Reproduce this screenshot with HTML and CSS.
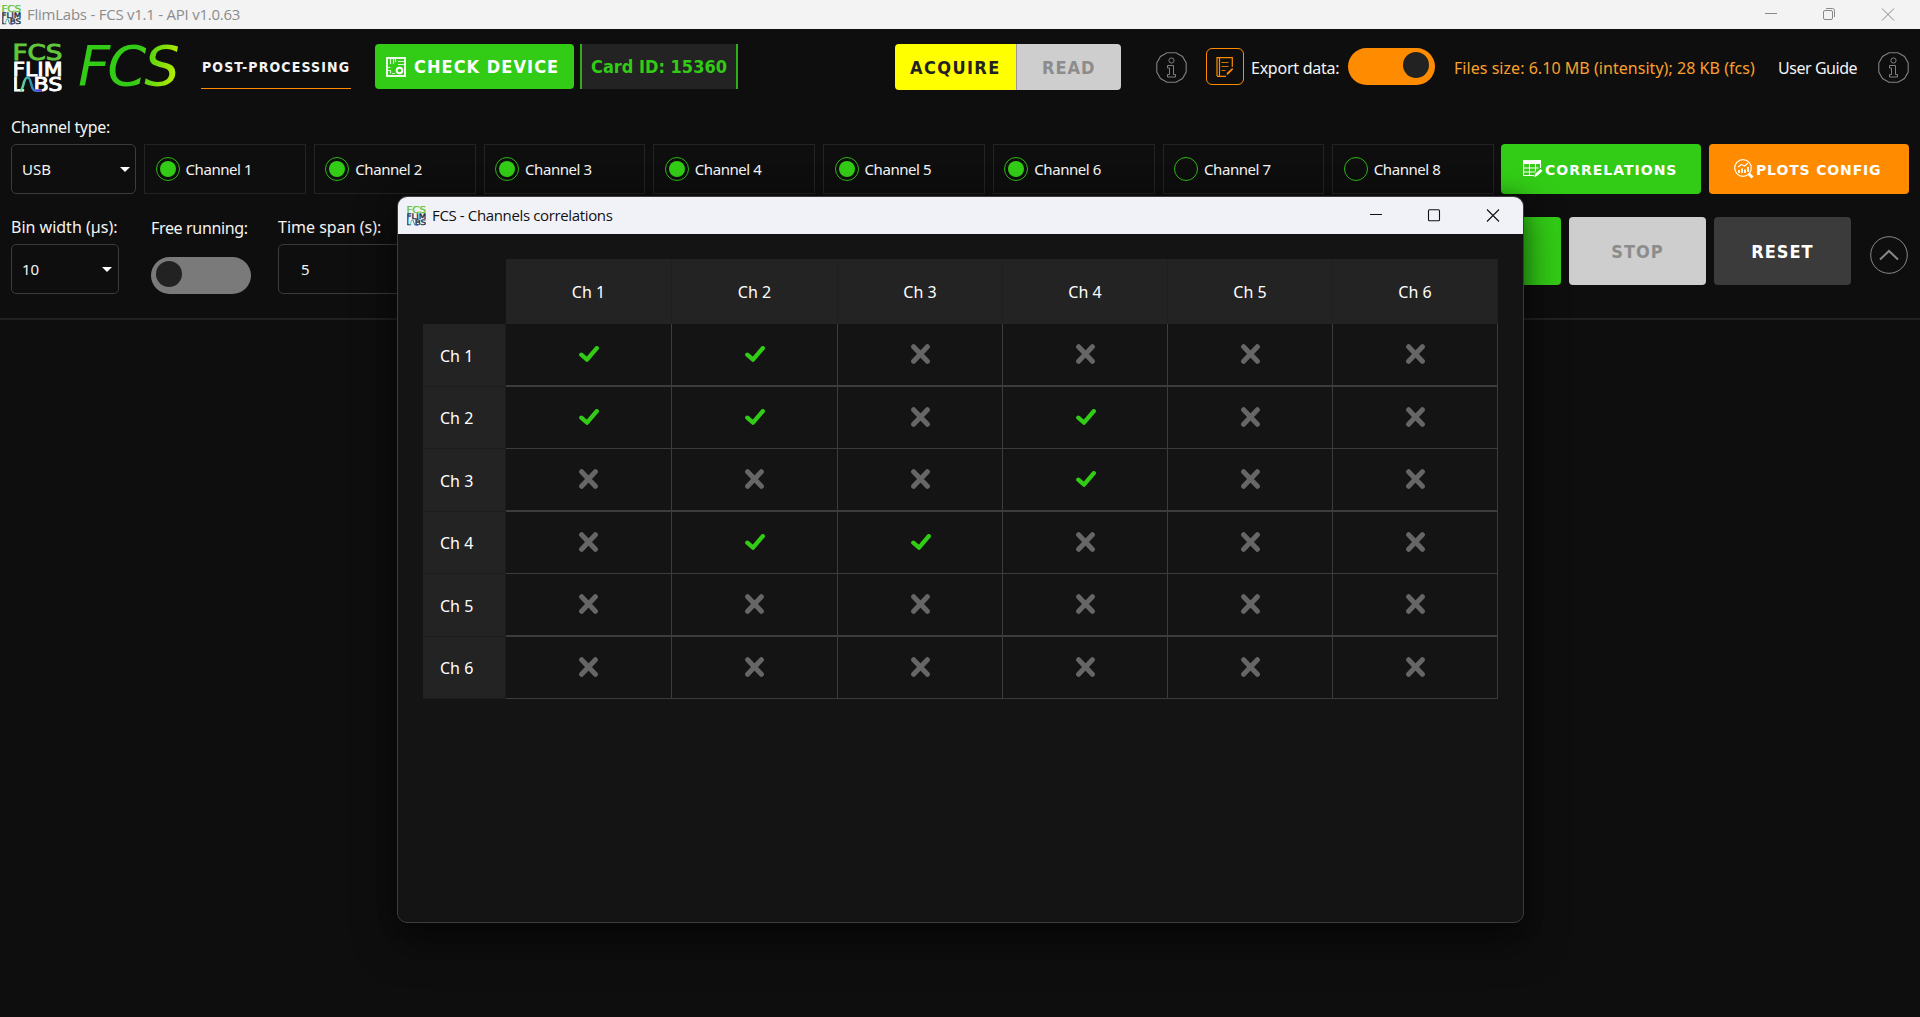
FILE: index.html
```html
<!DOCTYPE html>
<html lang="en">
<head>
<meta charset="utf-8">
<title>FlimLabs - FCS</title>
<link rel="stylesheet" href="styles.css">
</head>
<body>
<svg class="defs" width="0" height="0">
  <defs>
    <linearGradient id="wave" x1="0" x2="1"><stop offset="0" stop-color="#6fe89a"/><stop offset=".5" stop-color="#2f8fb5"/><stop offset="1" stop-color="#5a2be0"/></linearGradient>
    <symbol id="logo" viewBox="0 0 48 49">
      <g font-family="DejaVu Sans" font-size="21.5" stroke-width=".9">
        <text class="logo-top" x="-1.500" y="16.5" textLength="50" lengthAdjust="spacingAndGlyphs">FCS</text>
      </g>
      <g font-family="DejaVu Sans" font-size="19" stroke-width=".9">
        <text x="-1.500" y="32.5" textLength="50" lengthAdjust="spacingAndGlyphs">FLIM</text>
        <text x="-1.500" y="48.3" textLength="11" lengthAdjust="spacingAndGlyphs">L</text>
        <text x="19.500" y="48.3" textLength="29" lengthAdjust="spacingAndGlyphs">BS</text>
      </g>
      <path d="M6 47.500c4 0 3-13 7.500-13s3 13 7.500 13h7" fill="none" stroke="url(#wave)" stroke-width="2.600"/>
    </symbol>
    <symbol id="info" viewBox="0 0 31 31">
      <path d="M11 .8h9l6.500 3.700 3.700 6.500v9l-3.700 6.500-6.500 3.700h-9l-6.500-3.700L.8 20v-9l3.700-6.500z" stroke-width="1.100"/>
      <circle cx="15.500" cy="8.500" r="2.600"/>
      <path d="M11.500 13.500h6v9h2v2.500h-8v-2.500h2v-6.500h-2z"/>
    </symbol>
    <symbol id="yes" viewBox="0 0 20 16"><path d="M2.300 8.700l5.700 5L17.800 2.200" fill="none" stroke="#32cb16" stroke-width="4.300" stroke-linecap="round" stroke-linejoin="round"/></symbol>
    <symbol id="no" viewBox="0 0 19 20"><path d="M2.600 2.700l13.800 14.600M16.400 2.700L2.600 17.300" stroke="#666" stroke-width="5" stroke-linecap="round"/></symbol>
  </defs>
</svg>

<div class="titlebar">
  <svg class="logo light" width="19" height="20"><use href="#logo"/></svg>
  <span class="caption">FlimLabs - FCS v1.1 - API v1.0.63</span>
  <svg class="winbtns" width="130" height="13" fill="none" stroke="#888"><path d="M0 5.500h12M117 .5l12 12M129 .5l-12 12"/><rect x="58.500" y="2.500" width="9" height="9" rx="1.500"/><path d="M61 .5h6.500a2 2 0 0 1 2 2V9"/></svg>
</div>

<header class="header">
  <svg class="logo" width="48" height="49"><use href="#logo"/></svg>
  <div class="wordmark">FCS</div>
  <div class="tab">POST-PROCESSING</div>
  <div class="check">
    <svg width="20" height="20" fill="none" stroke="#fff"><rect x="1" y="1" width="18" height="18" stroke-width="1.800"/><path d="M4.500 2v5M7.500 2v5M9.500 2v3M12 4.500h6M12 7.500h6M2 10.500h2.500M2 13.500h2.500v3M6 16.500h3" stroke-width="1.200" opacity=".8"/><circle cx="13.500" cy="13.500" r="2.800" stroke-width="2"/></svg>
    <span>CHECK DEVICE</span>
  </div>
  <div class="card">Card ID: 15360</div>
  <div class="mode"><div class="acquire">ACQUIRE</div><div class="read">READ</div></div>
  <svg class="info" width="31" height="31"><use href="#info"/></svg>
  <div class="export-icon"><svg width="18" height="20" fill="none" stroke="#ff8c00" stroke-width="1.200"><path d="M10 19.300H3.500M1 19V.7h15.300v9M3.500 1v18.300H1"/><path d="M5.500 5.500h7M5.500 9.500h7M5.500 13.500h4" opacity=".8"/><path d="M10.500 18l.7-2.500 5-4.500 1 1.200-4.800 5z" fill="#ff8c00" stroke="none"/></svg></div>
  <span class="lbl export">Export data:</span>
  <div class="toggle on"></div>
  <span class="lbl files">Files size: 6.10 MB (intensity); 28 KB (fcs)</span>
  <span class="lbl guide">User Guide</span>
  <svg class="info" width="31" height="31"><use href="#info"/></svg>
</header>

<section class="row1">
  <div class="field type"><label class="lbl">Channel type:</label><div class="select"><span>USB</span><i class="caret"></i></div></div>
  <div class="channels">
    <div class="chan"><i class="radio on"></i><span>Channel 1</span></div>
    <div class="chan"><i class="radio on"></i><span>Channel 2</span></div>
    <div class="chan"><i class="radio on"></i><span>Channel 3</span></div>
    <div class="chan"><i class="radio on"></i><span>Channel 4</span></div>
    <div class="chan"><i class="radio on"></i><span>Channel 5</span></div>
    <div class="chan"><i class="radio on"></i><span>Channel 6</span></div>
    <div class="chan"><i class="radio"></i><span>Channel 7</span></div>
    <div class="chan"><i class="radio"></i><span>Channel 8</span></div>
  </div>
  <div class="action green"><svg width="20" height="18" fill="none" stroke="#fff" stroke-width="1.100"><path d="M0 0h18v4H0z" fill="#fff" stroke="none"/><path d="M.6 3v12.500H11M.6 8h15M.6 12h12M6.500 4v12M12.500 4v7M17.500 3v5"/><path d="M11 17l1-3 5.500-5 2 2-5.500 5z" fill="#fff" stroke="none"/></svg><span>CORRELATIONS</span></div>
  <div class="action orange"><svg width="20" height="20" fill="none" stroke="#fff" stroke-width="1.200"><circle cx="9" cy="9" r="8.300"/><path d="M5 14v-3M8 14V9.500M11 14v-3.500M14 13V8" stroke-width="1.800"/><path d="M4 8l3.500-2.500 3 1.500L14 4"/><path d="M14.500 14.500l4 4" stroke-width="3"/></svg><span>PLOTS CONFIG</span></div>
</section>

<section class="row2">
  <div class="field bin"><label class="lbl">Bin width (µs):</label><div class="select"><span>10</span><i class="caret"></i></div></div>
  <div class="field free"><label class="lbl">Free running:</label><div class="toggle"></div></div>
  <div class="field span"><label class="lbl">Time span (s):</label><div class="select"><span>5</span></div></div>
  <div class="big start">START</div>
  <div class="big stop">STOP</div>
  <div class="big reset">RESET</div>
  <svg class="collapse" width="38" height="38" fill="none" stroke="#888"><circle cx="19" cy="19" r="18.300"/><path d="M10 23.500l9-8.500 9 8.500" stroke-width="2"/></svg>
</section>

<div class="dialog">
  <div class="dlg-title">
    <svg class="logo light" width="19" height="20"><use href="#logo"/></svg>
    <span class="caption">FCS - Channels correlations</span>
    <svg class="winbtns" width="130" height="13" fill="none" stroke="#111" stroke-width="1.100"><path d="M0 5.500h12M117 .5l12 12M129 .5l-12 12"/><rect x="58.500" y=".7" width="11" height="11" rx="1"/></svg>
  </div>
  <div class="matrix" id="matrix">
    <div class="corner"></div>
  </div>
</div>
<script src="app.js"></script>
</body>
</html>
```
FILE: styles.css
```css
* { box-sizing: border-box; }
body {
  margin: 0; width: 1920px; height: 1017px; overflow: hidden; position: relative;
  background: #0e0e0e; color: #f4f4f4;
  font-family: "Noto Sans", "DejaVu Sans", sans-serif; font-size: 16px;
}
span, label, .tab, .card { white-space: nowrap; }
.defs { position: absolute; }
.tab, .check, .card, .mode, .big {
  font-family: "DejaVu Sans Condensed", "DejaVu Sans", sans-serif; font-stretch: condensed;
  font-weight: 700; letter-spacing: 1px;
}

.titlebar { height: 29px; background: #f3f3f3; display: flex; align-items: center; padding: 0 25px 0 2px; }
.caption { font-family: "Open Sans", sans-serif; font-size: 15px; line-height: 20px; margin: -2px 0 0 6px; }
.titlebar .caption { color: #8c8c8c; letter-spacing: -.24px; }
.winbtns { margin-left: auto; }
.logo { flex: none; fill: #fff; stroke: #fff; }
.logo.light { fill: #1d3348; stroke: #1d3348; }
.logo-top { fill: #62c83c; stroke: #62c83c; }

.header { height: 78px; display: flex; align-items: flex-start; padding: 15px 11px 0 14px; }
.header > * { flex: none; }
.header > .logo { margin-top: -1px; }
.wordmark {
  margin-left: 15px; width: 106px; height: 46px; line-height: 43px; padding-left: 1px;
  font-family: "DejaVu Sans", sans-serif; font-size: 56px; font-style: italic; letter-spacing: -3px;
  background: linear-gradient(100deg, #32cb16 55%, #c3f000 95%);
  -webkit-background-clip: text; background-clip: text; color: transparent;
}
.tab { margin-left: 18px; width: 150px; height: 45px; border-bottom: 1px solid #ff8c00; padding-left: 1px; line-height: 46px; font-size: 14px; letter-spacing: 1.12px; }
.check { margin-left: 24px; width: 199px; height: 45px; border-radius: 4px; background: #32cb16; display: flex; align-items: center; padding-left: 11px; font-size: 18px; color: #fff; }
.check span { margin-left: 8px; letter-spacing: 1.05px; }
.card { margin-left: 6px; width: 158px; height: 45px; background: #232323; border: solid #2fae18; border-width: 0 2px; padding-left: 9px; line-height: 46px; color: #32cb16; font-size: 18px; letter-spacing: 0; }
.mode { margin-left: 157px; display: flex; height: 46px; border-radius: 4px; overflow: hidden; font-size: 18px; line-height: 47px; }
.acquire { width: 121px; background: #ff0; color: #222; padding-left: 15px; letter-spacing: 1.4px; }
.read { width: 105px; background: #cecece; color: #8c8c8c; border-left: 1px solid #999; padding-left: 25px; }
.info { margin: 8px 0 0 35px; fill: none; stroke: #808080; }
.export-icon { margin: 4px 0 0 19px; width: 38px; height: 37px; border: 1px solid #ff8c00; border-radius: 6px; display: flex; align-items: center; justify-content: center; }
.lbl { font-size: 16px; line-height: 22px; }
.export { margin: 13px 0 0 7px; width: 90px; letter-spacing: -.25px; }
.toggle { width: 100px; height: 37px; border-radius: 19px; background: #7a7a7a; padding: 4px 5px; }
.toggle::before { content: ""; display: block; width: 26px; height: 26px; border-radius: 50%; background: #222; }
.toggle.on { margin: 4px 0 0 7px; width: 87px; background: #ff8c00; }
.toggle.on::before { margin-left: auto; margin-right: 1px; }
.files { margin: 13px 0 0 19px; width: 303px; color: #faa02c; letter-spacing: .04px; }
.guide { margin: 13px 0 0 21px; width: 81px; letter-spacing: -.45px; }
.guide + .info { margin-left: 19px; }

.row1 { height: 87px; display: flex; align-items: flex-end; padding: 0 11px; font-size: 15px; }
.field { display: flex; flex-direction: column; }
.field .lbl { margin-bottom: 6px; }
.select { height: 50px; border: 1px solid #3b3b3b; border-radius: 5px; display: flex; align-items: center; padding: 0 5px 0 10px; font-size: 15px; }
.caret { margin-left: auto; border: solid transparent; border-width: 5px 5px 0; border-top-color: #fff; }
.type { width: 125px; letter-spacing: -.33px; }
.type .select { letter-spacing: 0; }
.channels { margin-left: 8px; width: 1350px; display: grid; grid-template-columns: repeat(8, 1fr); column-gap: 8px; }
.chan { height: 50px; border: 1px solid #232323; display: flex; align-items: center; padding-left: 10.500px; letter-spacing: -.43px; }
.radio { width: 24px; height: 24px; border-radius: 50%; border: 1px solid #2fb516; margin-right: 6px; padding: 3px; }
.radio.on::before { content: ""; display: block; width: 16px; height: 16px; border-radius: 50%; background: #32cb16; }
.action { height: 50px; width: 200px; border-radius: 4px; display: flex; align-items: center; color: #fff; font: 700 14px "DejaVu Sans", sans-serif; }
.action span { margin: 1px 0 0 2px; }
.green { margin-left: 7px; background: #32cb16; padding-left: 22px; letter-spacing: 1px; }
.orange { margin-left: 8px; background: #ff8c00; padding-left: 25px; letter-spacing: .85px; }

.row2 { height: 126px; border-bottom: 2px solid #212121; display: flex; padding: 23px 12px 0 11px; font-size: 18px; }
.row2 .field { margin-top: -1px; }
.bin { width: 108px; }
.bin .select { padding-right: 6px; }
.free { margin-left: 32px; width: 100px; letter-spacing: -.34px; }
.free .lbl { margin-top: 1px; margin-bottom: 18px; }
.span { margin-left: 27px; width: 160px; }
.span .select { padding-left: 22px; }
.big { width: 137px; height: 68px; border-radius: 4px; display: flex; align-items: center; justify-content: center; margin-left: 8px; }
.start { margin-left: auto; background: #32cb16; color: #fff; }
.stop { background: #cecece; color: #8c8c8c; }
.reset { background: #3b3b3b; color: #fff; }
.collapse { margin: 19px 0 0 19px; }

.dialog { position: absolute; left: 397px; top: 196px; width: 1127px; height: 727px; border: 1px solid #3c3c3c; border-radius: 10px; background: #141414; overflow: hidden; box-shadow: 0 18px 40px rgba(0,0,0,.5), 0 0 20px rgba(0,0,0,.3); }
.dlg-title { height: 37px; background: #f1f2f8; display: flex; align-items: center; padding: 0 23px 0 9px; color: #111; }
.dlg-title .caption { letter-spacing: -.36px; }
.matrix { margin: 25px 0 0 25px; width: 1075px; display: grid; grid-template-columns: 83px 166px 166px repeat(4, 165px); grid-template-rows: 65px 63px 62px 63px 62px 63px 62px; }
.col { background: #232323; border-right: 1px solid #1f1f1f; display: flex; align-items: center; justify-content: center; color: #fff; }
.rowh { background: #232323; border: solid #1c1c1c; border-width: 0 1px 1px 0; display: flex; align-items: center; padding: 1px 0 0 17px; color: #fff; }
.cell { border: solid #3c3c3c; border-width: 0 1px 1px 0; display: flex; align-items: center; justify-content: center; padding-bottom: 1px; }
.cell.thick { border-bottom-width: 2px; }
.cell .tick { margin: 0 0 0 1px; }
```
FILE: app.js
```js
// One string per channel row; 1 marks an enabled correlation.
const pairs = ["110000", "110100", "000100", "011000", "000000", "000000"];
const matrix = document.getElementById("matrix");
let html = matrix.innerHTML;
for (let c = 1; c <= 6; c++) html += `<div class="col"><span>Ch ${c}</span></div>`;
pairs.forEach((row, r) => {
  html += `<div class="rowh"><span>Ch ${r + 1}</span></div>`;
  for (const v of row) {
    html += `<div class="cell${r % 2 ? "" : " thick"}">` + (v === "1"
      ? '<svg class="tick" width="20" height="16"><use href="#yes"/></svg>'
      : '<svg width="19" height="20"><use href="#no"/></svg>') + "</div>";
  }
});
matrix.innerHTML = html;
```
